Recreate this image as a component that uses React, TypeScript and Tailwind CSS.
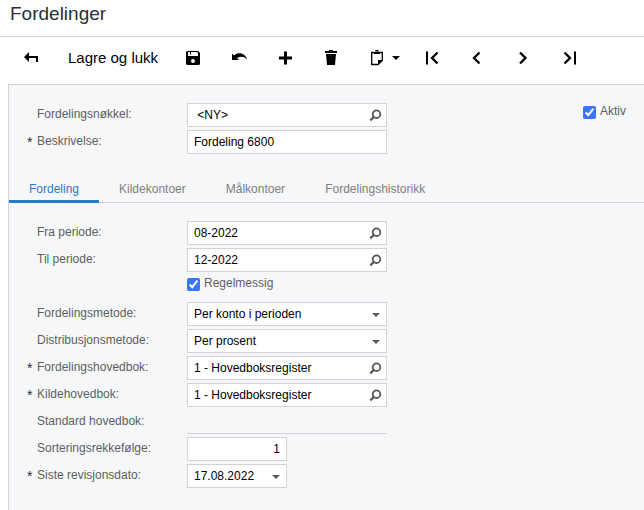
import { useState } from "react";
import type { ReactNode } from "react";

const tabs = ["Fordeling", "Kildekontoer", "Målkontoer", "Fordelingshistorikk"];

export default function App() {
  const [activeTab, setActiveTab] = useState("Fordeling");

  return (
    <div className="flex min-h-screen flex-col bg-white font-['Liberation_Sans',Arial,sans-serif] text-xs text-black">
      <header className="border-b border-[#d2d3d8] px-2.5 pt-0.5 pb-2.5">
        <h1 className="text-[19px] leading-6 text-[#2b2f36]">Fordelinger</h1>
      </header>

      <Toolbar />

      <main className="ml-2 flex-1 border-t border-l border-[#d2d3d8] bg-[#f5f7f9]">
        <section className="flex items-start justify-between pt-[18px] pr-[18px] pl-[18px]">
          <div>
            <Row id="key" label="Fordelingsnøkkel:">
              <Lookup id="key" value=" <NY>" />
            </Row>
            <Row id="desc" label="Beskrivelse:" required>
              <input id="desc" defaultValue="Fordeling 6800" className="h-6 w-[200px] border border-[#d2d3d8] bg-white px-1.5" />
            </Row>
          </div>
          <Checkbox label="Aktiv" />
        </section>

        <nav role="tablist" className="mt-4 flex h-[30px] border-b border-[#d2d3d8]">
          {tabs.map((t) => (
            <button
              key={t}
              role="tab"
              aria-selected={t === activeTab}
              onClick={() => setActiveTab(t)}
              className={`-mb-px border-b-3 px-5 pt-1 ${t === activeTab ? "border-[#2d7acc] text-[#2d7acc]" : "border-transparent text-[#7d8085]"}`}
            >
              {t}
            </button>
          ))}
        </nav>

        <section className="px-[18px] pt-[18px] pb-5">
          <Row id="from" label="Fra periode:">
            <Lookup id="from" value="08-2022" />
          </Row>
          <Row id="to" label="Til periode:">
            <Lookup id="to" value="12-2022" />
          </Row>
          <Row>
            <Checkbox label="Regelmessig" />
          </Row>
          <Row id="method" label="Fordelingsmetode:">
            <Select id="method" options={["Per konto i perioden", "Til og med perioden"]} />
          </Row>
          <Row id="dist" label="Distribusjonsmetode:">
            <Select id="dist" options={["Per prosent", "Per vekt"]} />
          </Row>
          <Row id="ledger" label="Fordelingshovedbok:" required>
            <Lookup id="ledger" value="1 - Hovedboksregister" />
          </Row>
          <Row id="source" label="Kildehovedbok:" required>
            <Lookup id="source" value="1 - Hovedboksregister" />
          </Row>
          <Row id="base" label="Standard hovedbok:">
            <input id="base" readOnly className="h-6 w-[200px] border-b border-[#d2d3d8] bg-transparent px-1.5" />
          </Row>
          <Row id="sort" label="Sorteringsrekkefølge:">
            <input id="sort" defaultValue="1" className="h-6 w-[100px] border border-[#d2d3d8] bg-white px-1.5 text-right" />
          </Row>
          <Row id="date" label="Siste revisjonsdato:" required>
            <div className="flex h-6 w-[100px] border border-[#d2d3d8] bg-white">
              <input id="date" defaultValue="17.08.2022" className="min-w-0 flex-1 pl-1.5" />
              <button aria-label="Velg dato" className="pr-1.5 pt-px">
                <Caret />
              </button>
            </div>
          </Row>
        </section>
      </main>
    </div>
  );
}

function Row({ id, label, required, children }: { id?: string; label?: string; required?: boolean; children: ReactNode }) {
  return (
    <div className="mb-[3px] flex h-6">
      <span className="w-2.5 pt-px text-sm leading-[22px] text-[#16324a]">{required ? "*" : ""}</span>
      {label ? (
        <label htmlFor={id} className="w-[150px] leading-[22px] text-[#5c5f64]">{label}</label>
      ) : (
        <span className="w-[150px]" />
      )}
      {children}
    </div>
  );
}

function Lookup({ id, value }: { id: string; value: string }) {
  return (
    <div className="flex h-6 w-[200px] border border-[#d2d3d8] bg-white">
      <input id={id} defaultValue={value} className="min-w-0 flex-1 pl-1.5" />
      <button aria-label="Søk" className="pr-1 pt-px">
        <svg width="13" height="13" viewBox="0 0 13 13" fill="none" stroke="#58585a">
          <circle cx="7.5" cy="5.2" r="3.8" strokeWidth="1.8" />
          <path d="M5 7.7L1.300 11.400" strokeWidth="2.2" />
        </svg>
      </button>
    </div>
  );
}

function Select({ id, options }: { id: string; options: string[] }) {
  return (
    <div className="relative">
      <select id={id} className="h-6 w-[200px] appearance-none border border-[#d2d3d8] bg-white px-1.5">
        {options.map((o) => (
          <option key={o}>{o}</option>
        ))}
      </select>
      <span className="pointer-events-none absolute inset-y-0 right-[7px] flex items-center pt-px">
        <Caret />
      </span>
    </div>
  );
}

function Checkbox({ label }: { label: string }) {
  return (
    <label className="flex items-start gap-1 leading-4 text-[#5c5f64]">
      <input type="checkbox" defaultChecked className="mt-[3px] size-[13px] accent-[#3874ff]" />
      {label}
    </label>
  );
}

function Caret({ fill = "#58585a" }: { fill?: string }) {
  return (
    <svg width="8" height="4" viewBox="0 0 8 4" fill={fill}>
      <path d="M0 0h8L4 4z" />
    </svg>
  );
}

function ToolButton({ label, children }: { label: string; children: ReactNode }) {
  return (
    <button aria-label={label} className="flex w-[46px] items-center justify-center">
      <svg width="16" height="16" viewBox="0 0 16 16">{children}</svg>
    </button>
  );
}

function Toolbar() {
  return (
    <div className="flex h-[47px] items-stretch pb-[5px] pl-2">
      <ToolButton label="Tilbake">
        <path d="M1 7l5-5v4h9v6h-2V8H6v4z" />
      </ToolButton>
      <button className="pr-3 pl-3.5 text-[15px]">Lagre og lukk</button>
      <ToolButton label="Lagre">
        <path fillRule="evenodd" d="M2 1h11l2 2v11l-1 1H2l-1-1V2zM3 2v4h10V3l-1-1H6v2.500H5V2zM8 9a2 2 0 100 4 2 2 0 000-4z" />
      </ToolButton>
      <ToolButton label="Angre">
        <path d="M1 3.500l2 2C5.500 3.200 8.500 2.900 11 3.700 14 4.700 15.700 7 16 10 14 7 10.500 5.700 6 8l2 2H1z" />
      </ToolButton>
      <ToolButton label="Ny">
        <path d="M7 1.500h3v5h5v3h-5v5H7v-5H2v-3h5z" />
      </ToolButton>
      <ToolButton label="Slett">
        <path d="M2 1h4V0h4v1h4v2H2zM3 4h10l-1 11H4z" />
      </ToolButton>
      <button aria-label="Utklippstavle" className="flex w-[55px] items-center gap-2 pl-4">
        <svg width="14" height="16" viewBox="0 0 14 16">
          <path d="M4 2.500H1.700v12H8l4.300-4V2.500H10" fill="none" stroke="#000" strokeWidth="1.300" />
          <path d="M4 4V2h1.500V0h3v2H10v2zM8 15v-5h5z" />
          <path d="M6.500 1h1v1h-1z" fill="#fff" />
        </svg>
        <Caret fill="#000" />
      </button>
      <ToolButton label="Første">
        <path d="M2 1.500h2v13H2z" />
        <path d="M13.500 2.500L8 8l5.500 5.500" fill="none" stroke="#000" strokeWidth="2.300" />
      </ToolButton>
      <ToolButton label="Forrige">
        <path d="M9.500 2.500L4 8l5.500 5.500" fill="none" stroke="#000" strokeWidth="2.300" />
      </ToolButton>
      <ToolButton label="Neste">
        <path d="M4 2.500L9.500 8 4 13.500" fill="none" stroke="#000" strokeWidth="2.300" />
      </ToolButton>
      <ToolButton label="Siste">
        <path d="M2.500 2.500L8 8l-5.500 5.500" fill="none" stroke="#000" strokeWidth="2.300" />
        <path d="M12 1.500h2v13h-2z" />
      </ToolButton>
    </div>
  );
}
